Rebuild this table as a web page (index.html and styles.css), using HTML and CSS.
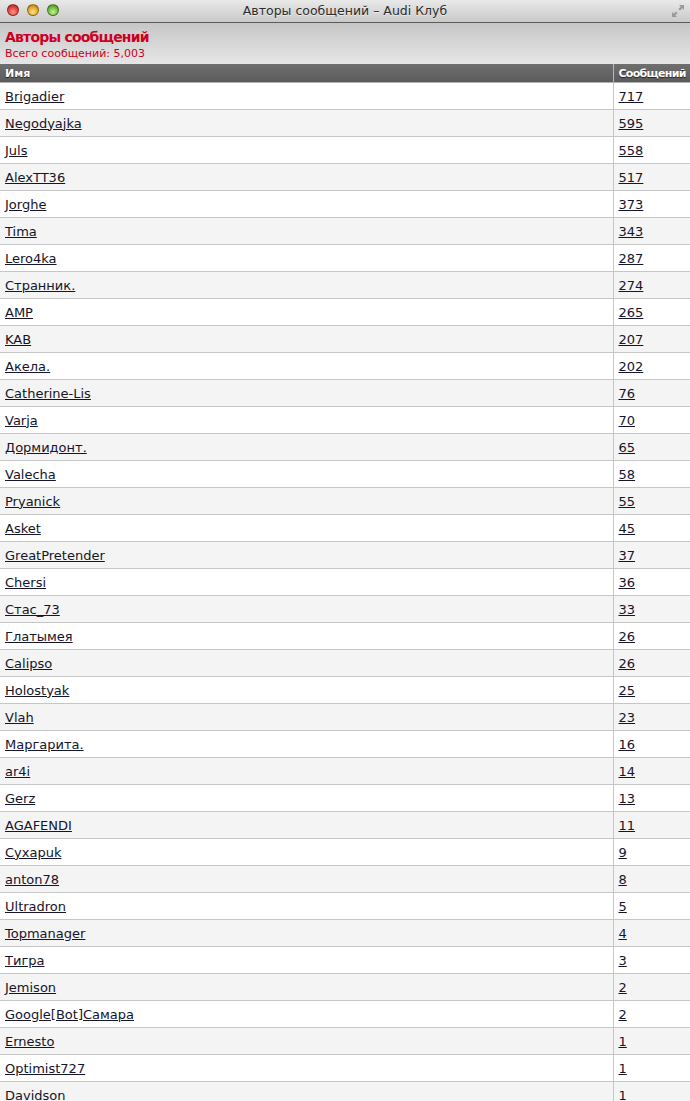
FILE: index.html
```html
<!DOCTYPE html>
<html lang="ru">
<head>
<meta charset="utf-8">
<title>Авторы сообщений – Audi Клуб</title>
<link rel="stylesheet" href="styles.css">
</head>
<body>
<div class="window">
  <div class="titlebar">
    <div class="lights">
      <span class="light red"></span>
      <span class="light yellow"></span>
      <span class="light green"></span>
    </div>
    <div class="wtitle">Авторы сообщений – Audi Клуб</div>
    <svg class="resize" width="14" height="14" viewBox="0 0 14 14">
      <path d="M8 1 H13 V6 L11.3 4.3 L9 6.6 L7.4 5 L9.7 2.7 Z" fill="#9a9a9a"/>
      <path d="M6 13 H1 V8 L2.7 9.7 L5 7.4 L6.6 9 L4.3 11.3 Z" fill="#9a9a9a"/>
    </svg>
  </div>
  <div class="header">
    <div class="h-title">Авторы сообщений</div>
    <div class="h-sub">Всего сообщений: 5,003</div>
  </div>
  <table class="list">
    <colgroup><col class="col-name"><col class="col-count"></colgroup>
    <thead>
      <tr><th class="c-name">Имя</th><th class="c-count">Сообщений</th></tr>
    </thead>
    <tbody>
      <tr><td><a href="#">Brigadier</a></td><td><a href="#">717</a></td></tr>
      <tr><td><a href="#">Negodyajka</a></td><td><a href="#">595</a></td></tr>
      <tr><td><a href="#">Juls</a></td><td><a href="#">558</a></td></tr>
      <tr><td><a href="#">AlexTT36</a></td><td><a href="#">517</a></td></tr>
      <tr><td><a href="#">Jorghe</a></td><td><a href="#">373</a></td></tr>
      <tr><td><a href="#">Tima</a></td><td><a href="#">343</a></td></tr>
      <tr><td><a href="#">Lero4ka</a></td><td><a href="#">287</a></td></tr>
      <tr><td><a href="#">Странник.</a></td><td><a href="#">274</a></td></tr>
      <tr><td><a href="#">AMP</a></td><td><a href="#">265</a></td></tr>
      <tr><td><a href="#">KAB</a></td><td><a href="#">207</a></td></tr>
      <tr><td><a href="#">Акела.</a></td><td><a href="#">202</a></td></tr>
      <tr><td><a href="#">Catherine-Lis</a></td><td><a href="#">76</a></td></tr>
      <tr><td><a href="#">Varja</a></td><td><a href="#">70</a></td></tr>
      <tr><td><a href="#">Дормидонт.</a></td><td><a href="#">65</a></td></tr>
      <tr><td><a href="#">Valecha</a></td><td><a href="#">58</a></td></tr>
      <tr><td><a href="#">Pryanick</a></td><td><a href="#">55</a></td></tr>
      <tr><td><a href="#">Asket</a></td><td><a href="#">45</a></td></tr>
      <tr><td><a href="#">GreatPretender</a></td><td><a href="#">37</a></td></tr>
      <tr><td><a href="#">Chersi</a></td><td><a href="#">36</a></td></tr>
      <tr><td><a href="#">Стас_73</a></td><td><a href="#">33</a></td></tr>
      <tr><td><a href="#">Глатымея</a></td><td><a href="#">26</a></td></tr>
      <tr><td><a href="#">Calipso</a></td><td><a href="#">26</a></td></tr>
      <tr><td><a href="#">Holostyak</a></td><td><a href="#">25</a></td></tr>
      <tr><td><a href="#">Vlah</a></td><td><a href="#">23</a></td></tr>
      <tr><td><a href="#">Маргарита.</a></td><td><a href="#">16</a></td></tr>
      <tr><td><a href="#">ar4i</a></td><td><a href="#">14</a></td></tr>
      <tr><td><a href="#">Gerz</a></td><td><a href="#">13</a></td></tr>
      <tr><td><a href="#">AGAFENDI</a></td><td><a href="#">11</a></td></tr>
      <tr><td><a href="#">Сухарuk</a></td><td><a href="#">9</a></td></tr>
      <tr><td><a href="#">anton78</a></td><td><a href="#">8</a></td></tr>
      <tr><td><a href="#">Ultradron</a></td><td><a href="#">5</a></td></tr>
      <tr><td><a href="#">Topmanager</a></td><td><a href="#">4</a></td></tr>
      <tr><td><a href="#">Тигра</a></td><td><a href="#">3</a></td></tr>
      <tr><td><a href="#">Jemison</a></td><td><a href="#">2</a></td></tr>
      <tr><td><a href="#">Google[Bot]Самара</a></td><td><a href="#">2</a></td></tr>
      <tr><td><a href="#">Ernesto</a></td><td><a href="#">1</a></td></tr>
      <tr><td><a href="#">Optimist727</a></td><td><a href="#">1</a></td></tr>
      <tr><td><a href="#">Davidson</a></td><td><a href="#">1</a></td></tr>
    </tbody>
  </table>
</div>
</body>
</html>
```

FILE: styles.css
```css
html, body {
  margin: 0;
  padding: 0;
  background: #ffffff;
}
body {
  font-family: "DejaVu Sans", Verdana, sans-serif;
  overflow: hidden;
  height: 1101px;
}
.window {
  width: 690px;
}
.titlebar {
  position: relative;
  height: 22px;
  background: linear-gradient(#e9e9e9, #c9c9c9);
  border-bottom: 1px solid #5a5a5a;
  display: flex;
  align-items: center;
  justify-content: center;
}
.lights {
  position: absolute;
  left: 7px;
  top: 4px;
  display: flex;
  gap: 8px;
}
.light {
  width: 12px;
  height: 12px;
  border-radius: 50%;
  box-sizing: border-box;
  border: 1px solid rgba(0,0,0,0.35);
}
.red { background: radial-gradient(circle at 50% 70%, #ff9a8e 0%, #e0443a 55%, #a51c16 100%); }
.yellow { background: radial-gradient(circle at 50% 70%, #ffe38a 0%, #e4a62a 55%, #a4700e 100%); }
.green { background: radial-gradient(circle at 50% 70%, #c8f29a 0%, #6fbd3e 55%, #3c7a18 100%); }
.wtitle {
  font-family: "DejaVu Sans", sans-serif;
  font-size: 12.5px;
  color: #2b2b2b;
  text-shadow: 0 1px 0 rgba(255,255,255,0.6);
  line-height: 22px;
}
.resize {
  position: absolute;
  right: 5px;
  top: 4px;
}
.header {
  height: 41px;
  background: linear-gradient(#c6c6c6, #e6e6e6);
  padding: 6px 5px 0 5px;
  box-sizing: border-box;
}
.h-title {
  color: #cc0022;
  font-weight: bold;
  font-size: 14px;
  letter-spacing: -0.8px;
  line-height: 17px;
}
.h-sub {
  color: #cc0022;
  font-size: 11px;
  line-height: 15px;
}
.list {
  width: 690px;
  border-collapse: collapse;
  table-layout: fixed;
  font-size: 13px;
}
.col-name { width: 613px; }
.col-count { width: 77px; }
.list th {
  background: linear-gradient(#6e6e6e, #5c5c5c);
  color: #ffffff;
  font-size: 11px;
  font-weight: bold;
  text-align: left;
  height: 18px;
  padding: 0 5px;
  white-space: nowrap;
  text-shadow: 0 1px 1px #222;
  border-bottom: 1px solid #b0b0b0;
}
.list th.c-count {
  border-left: 1px solid #b8b8b8;
  letter-spacing: -0.7px;
}
.list td {
  height: 26px;
  padding: 0 5px;
  border-bottom: 1px solid #c6c6c6;
  vertical-align: middle;
}
.list td + td {
  border-left: 1px solid #c6c6c6;
}
.list tbody tr:nth-child(even) td {
  background: #f4f4f4;
}
.list a {
  color: #14142a;
  text-decoration: underline;
}
```
